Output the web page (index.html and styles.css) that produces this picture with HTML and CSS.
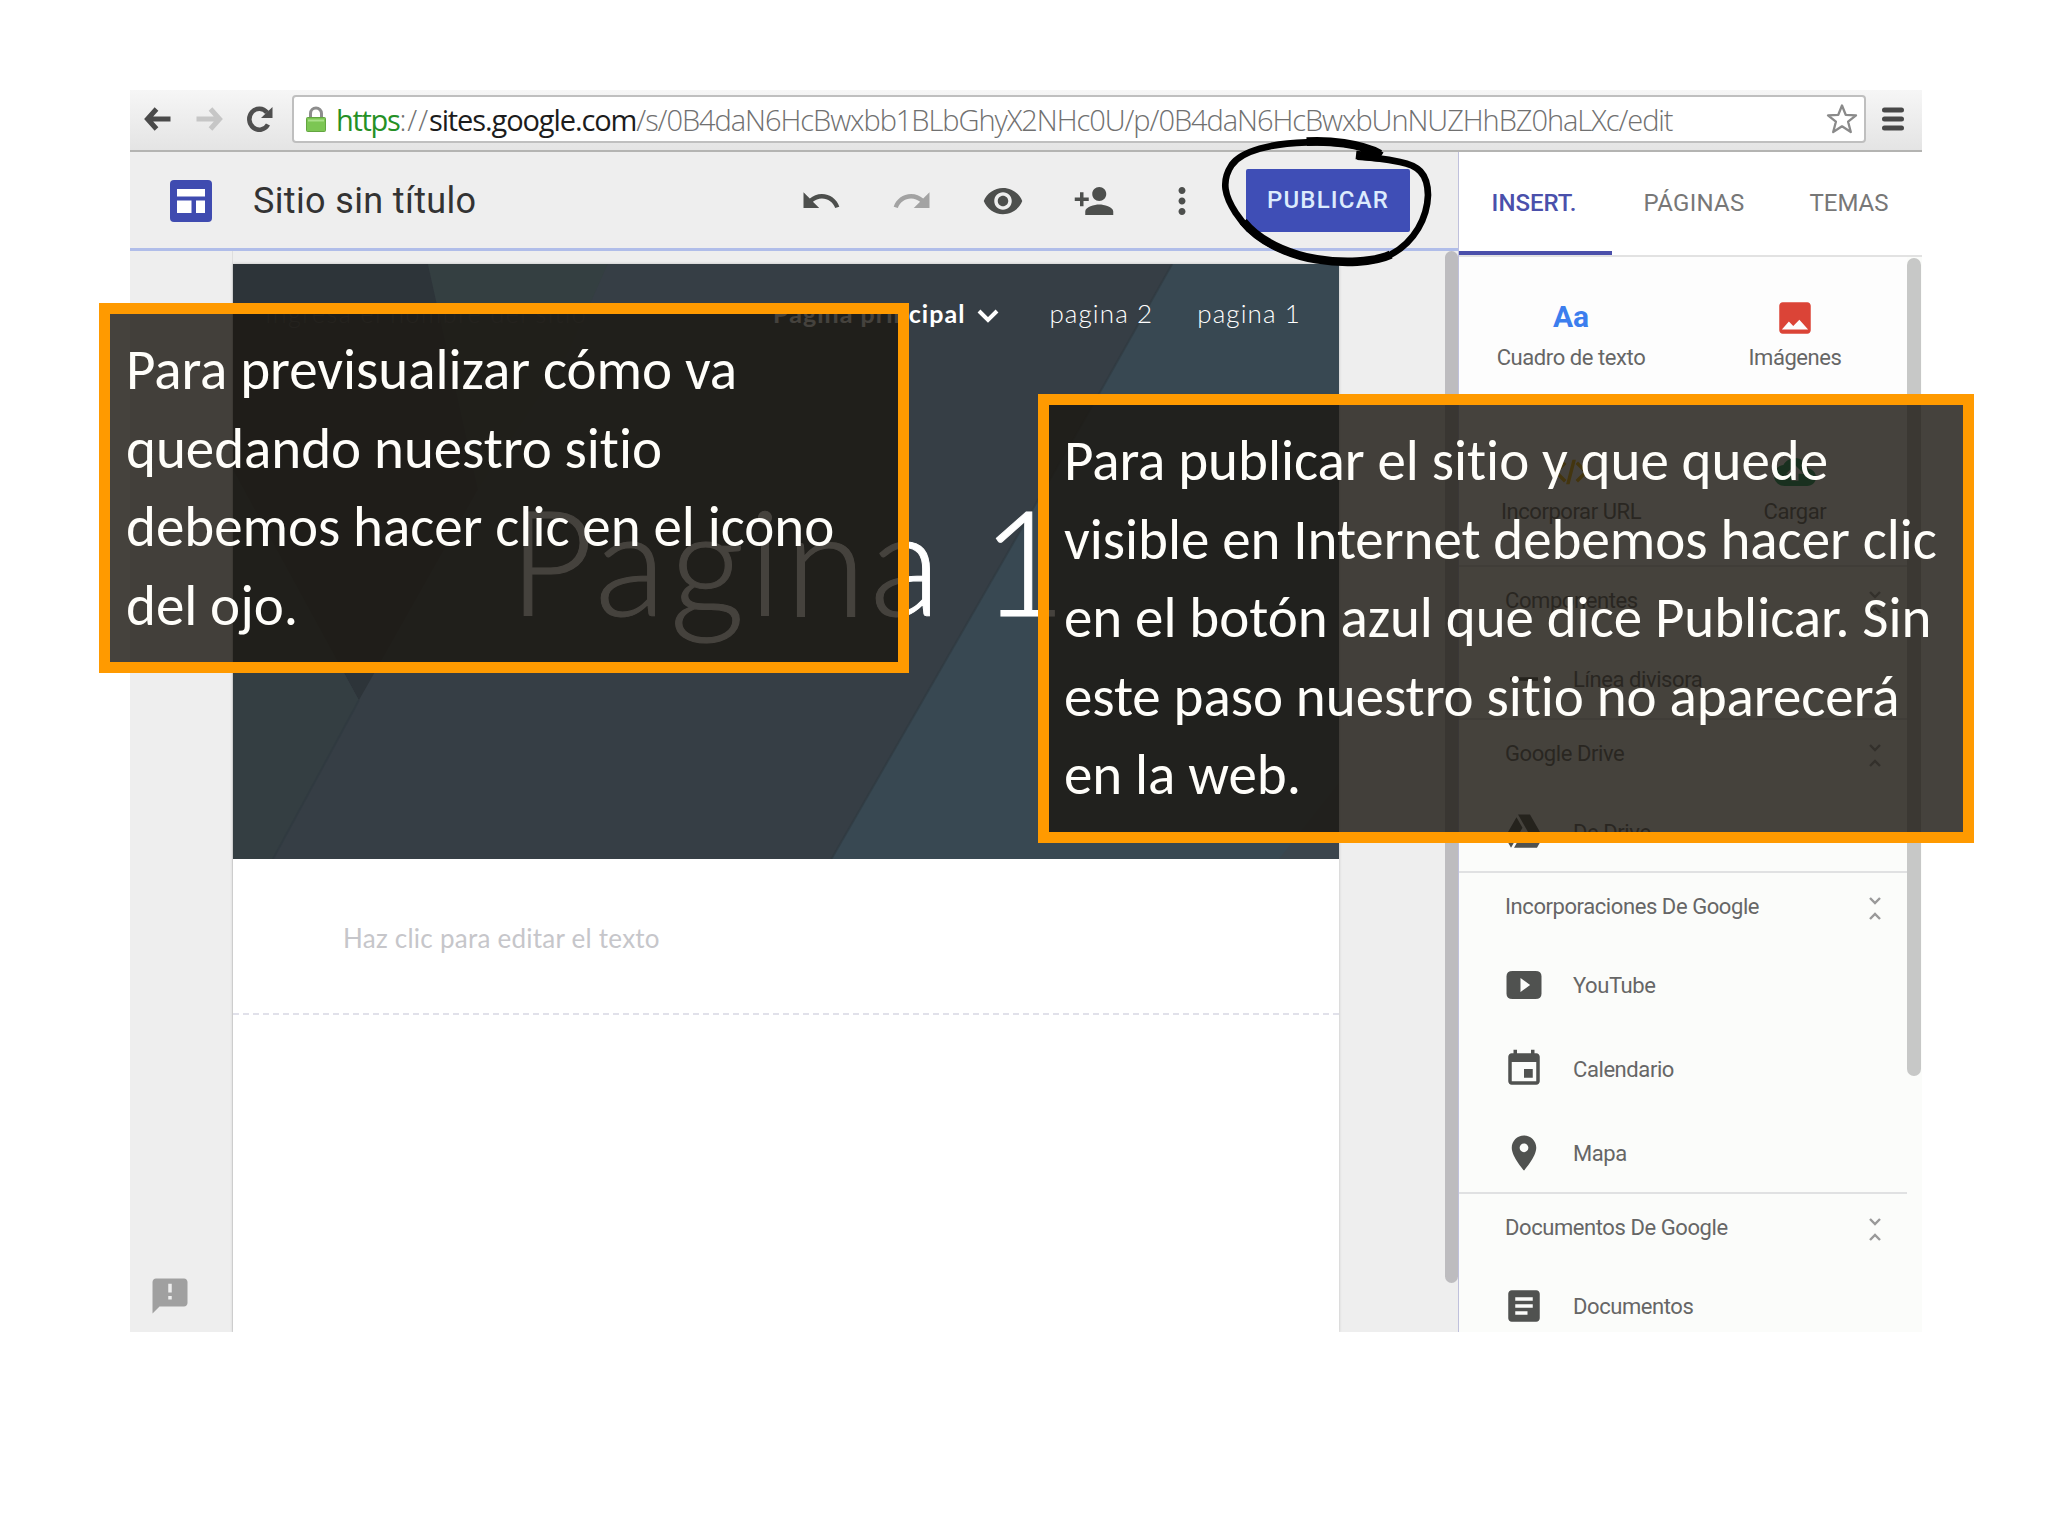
FILE: index.html
```
<!DOCTYPE html>
<html lang="es">
<head>
<meta charset="utf-8">
<title>Sitio sin título</title>
<link rel="stylesheet" href="styles.css">
</head>
<body>
<main class="browser">
  <header class="chrome">
    <svg class="nav-back" viewBox="0 0 27 24"><path d="M12 2 3 12l9 10M4 12h22" fill="none" stroke="currentColor" stroke-width="5"/></svg>
    <svg class="nav-forward" viewBox="0 0 27 24"><path d="M15 2l9 10-9 10M23 12H1" fill="none" stroke="currentColor" stroke-width="5"/></svg>
    <svg class="nav-reload" viewBox="0 0 27 26"><path d="M22 18.500A10 10.500 0 1 1 21 6.500" fill="none" stroke="currentColor" stroke-width="4.600"/><path d="M26.500 1v11H15z" fill="currentColor"/></svg>
    <div class="address">
      <svg class="lock" viewBox="0 0 20 26"><path d="M4.500 13V7.500a5.500 5.500 0 0 1 11 0V13" fill="none" stroke="#8d8d8d" stroke-width="3"/><rect x=".5" y="11.500" width="19" height="14" rx="1" fill="#7cc653" stroke="#63a541"/><path d="M2 14.500h16" stroke="#a9e088" stroke-width="2"/></svg>
      <p class="url"><span class="url-scheme">https</span><span class="url-sep">://</span><span class="url-host">sites.google.com</span><span class="url-path">/s/0B4daN6HcBwxbb1BLbGhyX2NHc0U/p/0B4daN6HcBwxbUnNUZHhBZ0haLXc/edit</span></p>
      <svg class="star" viewBox="0 0 32 32"><path d="M16 2.500l3.700 9.300 10.300.6-7.900 6.300 2.700 10.300L16 23.300 7.200 29l2.700-10.300L2 12.400l10.300-.6z" fill="#fff" stroke="#8a8a8a" stroke-width="2.300" stroke-linejoin="round"/></svg>
    </div>
    <svg class="menu" viewBox="0 0 22 24"><path d="M2.500 3h17M2.500 12h17M2.500 21h17" stroke="#484848" stroke-width="5" stroke-linecap="round"/></svg>
  </header>

  <div class="app">
    <section class="editor">
      <div class="toolbar">
        <svg class="logo" viewBox="0 0 42 42"><rect width="42" height="42" rx="4" fill="#3f4bb0"/><path d="M7 9h28v7.500H7zM7 20.500h14.500v12.500H7zM26 20.500h9v12.500h-9z" fill="#fff"/></svg>
        <h1 class="site-title">Sitio sin título</h1>
        <div class="tools">
          <svg class="icon" viewBox="0 0 24 24"><path d="M12.500 8c-2.650 0-5.050.99-6.900 2.600L2 7v9h9l-3.620-3.620c1.390-1.160 3.160-1.880 5.120-1.880 3.540 0 6.550 2.310 7.600 5.500l2.370-.78C21.080 11.030 17.150 8 12.500 8z"/></svg>
          <svg class="icon icon-off" viewBox="0 0 24 24"><path d="M18.400 10.600C16.550 8.990 14.150 8 11.500 8c-4.650 0-8.580 3.030-9.960 7.220L3.900 16c1.050-3.190 4.050-5.500 7.600-5.500 1.950 0 3.730.72 5.120 1.880L13 16h9V7l-3.600 3.600z"/></svg>
          <svg class="icon" viewBox="0 0 24 24"><path d="M12 4.500C7 4.500 2.730 7.610 1 12c1.730 4.390 6 7.500 11 7.500s9.270-3.110 11-7.500c-1.730-4.390-6-7.500-11-7.500zM12 17c-2.760 0-5-2.240-5-5s2.240-5 5-5 5 2.240 5 5-2.240 5-5 5zm0-8c-1.660 0-3 1.340-3 3s1.340 3 3 3 3-1.340 3-3-1.340-3-3-3z"/></svg>
          <svg class="icon" viewBox="0 0 24 24"><path d="M15 12c2.210 0 4-1.790 4-4s-1.790-4-4-4-4 1.790-4 4 1.790 4 4 4zm-9-2V7H4v3H1v2h3v3h2v-3h3v-2H6zm9 4c-2.670 0-8 1.340-8 4v2h16v-2c0-2.660-5.330-4-8-4z"/></svg>
          <svg class="icon" viewBox="0 0 24 24"><path d="M12 8c1.100 0 2-.9 2-2s-.9-2-2-2-2 .9-2 2 .9 2 2 2zm0 2c-1.100 0-2 .9-2 2s.9 2 2 2 2-.9 2-2-.9-2-2-2zm0 6c-1.100 0-2 .9-2 2s.9 2 2 2 2-.9 2-2-.9-2-2-2z"/></svg>
        </div>
        <button class="publish">PUBLICAR</button>
      </div>
      <div class="canvas">
        <aside class="gutter">
          <svg class="feedback" viewBox="0 0 24 24"><path d="M20 2H4c-1.100 0-1.990.9-1.990 2L2 22l4-4h14c1.100 0 2-.9 2-2V4c0-1.100-.9-2-2-2zm-7 12h-2v-2h2v2zm0-4h-2V5h2v5z"/></svg>
        </aside>
        <article class="page">
          <div class="hero">
            <svg class="facets" viewBox="0 0 1107 596" preserveAspectRatio="none">
              <rect width="1107" height="596" fill="#363e45"/>
              <path d="M195 0h180l-40 90-90 136z" fill="#343f41"/>
              <path d="M0 0h195l50 226-119 211L0 206z" fill="#2d3439"/>
              <path d="M0 206l126 231L40 596H0z" fill="#343e42"/>
              <path d="M940 0h167v596H599l269-468z" fill="#384852"/>
              <path d="M1107 520v76h-60z" fill="#3b454d"/>
              <path d="M940 0l-72 128L599 596M126 437L40 596" fill="none" stroke="#2e383f" stroke-opacity=".6" stroke-width="2"/>
            </svg>
            <nav class="site-nav">
              <span class="site-name">Ingresa el nombre del sitio</span>
              <span class="nav-current">Página principal</span>
              <svg class="caret" viewBox="0 0 22 14"><path d="M2 2l9 9 9-9" fill="none" stroke="#fff" stroke-width="4"/></svg>
              <span class="nav-link nav-two">pagina 2</span>
              <span class="nav-link">pagina 1</span>
            </nav>
            <h2 class="page-title">Pagina 1</h2>
          </div>
          <p class="placeholder">Haz clic para editar el texto</p>
        </article>
        <div class="canvas-scroll"></div>
      </div>
    </section>

    <aside class="panel">
      <div class="tabs">
        <span class="tab tab-active">INSERT.</span>
        <span class="tab tab-pages">PÁGINAS</span>
        <span class="tab tab-themes">TEMAS</span>
      </div>
      <div class="panel-body">
        <div class="insert">
          <div class="tiles">
            <div class="tile"><span class="tile-aa">Aa</span><span class="label">Cuadro de texto</span></div>
            <div class="tile"><svg class="tile-icon red" viewBox="0 0 24 24"><path d="M21 19V5c0-1.100-.9-2-2-2H5c-1.100 0-2 .9-2 2v14c0 1.100.9 2 2 2h14c1.100 0 2-.9 2-2zM4.500 18.500l4-4.500 2.500 2.500L14.500 13l5 5.500z"/></svg><span class="label">Imágenes</span></div>
            <div class="tile"><svg class="tile-icon yellow" viewBox="0 0 24 24"><path d="M9.400 16.600L4.800 12l4.600-4.600L8 6l-6 6 6 6zm5.200 0l4.600-4.600-4.600-4.600L16 6l6 6-6 6zM12.800 5h2L11.200 19h-2z"/></svg><span class="label">Incorporar URL</span></div>
            <div class="tile"><svg class="tile-icon green" viewBox="0 0 24 24"><path d="M19.350 10.040C18.670 6.590 15.640 4 12 4 9.110 4 6.600 5.640 5.350 8.040 2.340 8.360 0 10.910 0 14c0 3.310 2.690 6 6 6h13c2.760 0 5-2.240 5-5 0-2.640-2.050-4.780-4.650-4.960zM14 13v4h-4v-4H7l5-5 5 5h-3z"/></svg><span class="label">Cargar</span></div>
          </div>
          <section class="group">
            <h3 class="group-head"><span class="label">Componentes</span><svg class="fold" viewBox="0 0 12 25"><path d="M1 2l5 5 5-5M1 23l5-5 5 5"/></svg></h3>
            <div class="item"><svg class="icon" viewBox="0 0 24 24"><path d="M4 11h16v2H4z"/></svg><span class="label">Línea divisora</span></div>
          </section>
          <section class="group">
            <h3 class="group-head"><span class="label">Google Drive</span><svg class="fold" viewBox="0 0 12 25"><path d="M1 2l5 5 5-5M1 23l5-5 5 5"/></svg></h3>
            <div class="item"><svg class="icon" viewBox="0 0 24 24"><path d="M7.710 3.500L1.150 15l3.430 6 6.550-11.500M9.730 15L6.300 21h13.120l3.430-6M22.280 14L15.420 2H8.580l6.850 12z"/></svg><span class="label">De Drive</span></div>
          </section>
          <section class="group">
            <h3 class="group-head"><span class="label">Incorporaciones De Google</span><svg class="fold" viewBox="0 0 12 25"><path d="M1 2l5 5 5-5M1 23l5-5 5 5"/></svg></h3>
            <div class="item"><svg class="icon" viewBox="0 0 24 24"><path fill-rule="evenodd" d="M5.500 4h13Q22 4 22 7v10q0 3-3.500 3h-13Q2 20 2 17V7q0-3 3.500-3zM10 8v8l5.500-4z"/></svg><span class="label">YouTube</span></div>
            <div class="item"><svg class="icon" viewBox="0 0 24 24"><path d="M17 12h-5v5h5v-5zM16 1v2H8V1H6v2H5c-1.110 0-1.990.9-1.990 2L3 19c0 1.100.89 2 2 2h14c1.100 0 2-.9 2-2V5c0-1.100-.9-2-2-2h-1V1h-2zm3 18H5V8h14v11z"/></svg><span class="label">Calendario</span></div>
            <div class="item"><svg class="icon" viewBox="0 0 24 24"><path d="M12 2C8.130 2 5 5.130 5 9c0 5.250 7 13 7 13s7-7.750 7-13c0-3.870-3.130-7-7-7zm0 9.500c-1.380 0-2.500-1.120-2.500-2.500s1.120-2.500 2.500-2.500 2.500 1.120 2.500 2.500-1.120 2.500-2.500 2.500z"/></svg><span class="label">Mapa</span></div>
          </section>
          <section class="group">
            <h3 class="group-head"><span class="label">Documentos De Google</span><svg class="fold" viewBox="0 0 12 25"><path d="M1 2l5 5 5-5M1 23l5-5 5 5"/></svg></h3>
            <div class="item"><svg class="icon" viewBox="0 0 24 24"><path d="M19 3H5c-1.100 0-2 .9-2 2v14c0 1.100.9 2 2 2h14c1.100 0 2-.9 2-2V5c0-1.100-.9-2-2-2zm-5 14H7v-2h7v2zm3-4H7v-2h10v2zm0-4H7V7h10v2z"/></svg><span class="label">Documentos</span></div>
          </section>
        </div>
        <div class="panel-scroll"></div>
      </div>
    </aside>
  </div>
</main>

<svg class="marker" viewBox="0 0 780 450"><path d="M545 76C495 42 405 35 320 37C215 40 125 62 95 105C62 155 75 200 108 250C155 325 250 372 350 388C430 401 520 398 572 374C645 335 682 262 684 195C683 128 652 106 600 96C560 88 520 82 472 80" fill="none" stroke="#000" stroke-width="20"/><path d="M320 35C385 31 480 40 540 72M130 275C190 350 300 380 350 388C430 401 520 398 572 374M468 75l70 7" fill="none" stroke="#000" stroke-width="26"/></svg>
<p class="callout callout-preview">Para previsualizar cómo va<br>quedando nuestro sitio<br>debemos hacer clic en el icono<br>del ojo.</p>
<p class="callout callout-publish">Para publicar el sitio y que quede<br>visible en Internet debemos hacer clic<br>en el botón azul que dice Publicar. Sin<br>este paso nuestro sitio no aparecerá<br>en la web.</p>
</body>
</html>
```
FILE: styles.css
```
* { box-sizing: border-box; }
body {
  margin: 0;
  height: 1536px;
  padding: 90px 126px 0 130px;
  background: #fff;
  font-family: Roboto, "Liberation Sans", sans-serif;
  position: relative;
  overflow: hidden;
}
h1, h2, h3, p { margin: 0; font-weight: 400; }
svg { display: block; flex: none; }

.browser { width: 1792px; height: 1242px; overflow: hidden; display: flex; flex-direction: column; }

/* Browser bar */
.chrome {
  height: 62px;
  flex: none;
  display: flex;
  align-items: center;
  padding: 0 18px 2px 14px;
  background: linear-gradient(#f6f6f6, #e4e4e4);
  border-bottom: 2px solid #b4b4b2;
}
.nav-back { width: 28px; height: 24px; color: #4a4a4a; }
.nav-forward { width: 28px; height: 24px; margin-left: 23px; color: #c6c6c6; }
.nav-reload { width: 27px; height: 26px; margin-left: 23px; color: #4f4f4f; }
.address {
  flex: 1;
  height: 48px;
  margin: 0 16px 0 19px;
  padding: 0 6px 0 12px;
  display: flex;
  align-items: center;
  background: #fff;
  border: 2px solid #bfbfbf;
  border-radius: 4px;
}
.lock { width: 20px; height: 26px; }
.url {
  flex: 1;
  padding: 1px 0 0 10px;
  white-space: nowrap;
  font: 300 29px/40px "Open Sans", "Noto Sans", sans-serif;
  color: #707070;
  letter-spacing: -1.05px;
}
.url-scheme { color: #259025; font-weight: 400; letter-spacing: -1.3px; }
.url-sep { letter-spacing: .9px; }
.url-host { color: #1c1c1c; font-weight: 400; letter-spacing: -1.1px; }
.star { width: 32px; height: 32px; }
.menu { width: 22px; height: 24px; }

.app { flex: 1; display: flex; min-height: 0; }

/* Editor */
.editor { width: 1328px; flex: none; display: flex; flex-direction: column; background: #eee; }
.toolbar {
  height: 99px;
  flex: none;
  display: flex;
  align-items: center;
  padding: 1px 48px 0 40px;
  border-bottom: 3px solid #b0bde9;
}
.logo { width: 42px; height: 42px; }
.site-title { margin: 1px 0 0 41px; font-size: 36px; line-height: 44px; letter-spacing: .35px; color: #333; width: 510px; }
.tools { flex: 1; display: flex; gap: 49px; margin-left: 37px; }
.icon { width: 42px; height: 42px; fill: #4d4f4d; }
.tools .icon:last-child { margin-left: -3px; }
.tools .icon-off { fill: #a3a3a3; }
.publish {
  width: 164px;
  height: 63px;
  padding: 0 0 2px;
  border: 0;
  border-radius: 2px;
  background: #3f4eb6;
  color: #dcebfd;
  font: 500 24px/30px Roboto, sans-serif;
  letter-spacing: 1.2px;
}
.canvas { flex: 1; display: flex; min-height: 0; }
.gutter { width: 103px; display: flex; flex-direction: column; justify-content: flex-end; padding: 0 0 15px 19px; border-right: 1px solid #dedede; }
.feedback { width: 42px; height: 42px; fill: #a0a0a0; }
.page { width: 1106px; margin-top: 13px; background: #fff; box-shadow: 0 0 3px rgba(0, 0, 0, .2); }
.canvas-scroll { width: 13px; height: 1032px; margin-left: auto; border-radius: 7px; background: #bdbcbf; }

.hero { position: relative; height: 595px; overflow: hidden; color: #fff; font-family: Lato, "Open Sans", sans-serif; }
.facets { position: absolute; inset: 0; width: 100%; height: 100%; }
.site-nav { position: relative; display: flex; align-items: center; padding: 30px 38px 0 32px; height: 68px; font-size: 25px; white-space: nowrap; }
.site-name { width: 508px; font-weight: 300; letter-spacing: 1.5px; color: #4b5053; }
.nav-current { font-weight: 700; letter-spacing: 1.05px; }
.caret { width: 22px; height: 14px; margin: 5px 0 0 12px; }
.nav-link { font-weight: 300; font-size: 26px; letter-spacing: 1.1px; }
.nav-two { margin: 0 44px 0 auto; }
.page-title { position: relative; margin-top: 140px; padding-left: 276px; font-size: 146px; line-height: 176px; font-weight: 300; letter-spacing: 4.2px; word-spacing: -7px; -webkit-text-stroke: 1px currentColor; }
.placeholder {
  height: 156px;
  padding: 60px 0 0 110px;
  border-bottom: 2px dashed #e1e1ea;
  font: 400 26px/38px Lato, sans-serif;
  letter-spacing: .25px;
  color: #c6c6ca;
}

/* Insert panel */
.panel { flex: 1; min-width: 0; display: flex; flex-direction: column; border-left: 1px solid #bfc0dc; background: #fbfcfa; color: #666; }
.tabs { height: 105px; flex: none; display: flex; border-bottom: 2px solid #e2e2e2; background: #fff; }
.tab { display: flex; align-items: center; justify-content: center; height: 103px; font-size: 24px; color: #777; padding-bottom: 1px; }
.tab-active { width: 153px; height: 103px; border-bottom: 4px solid #4b50ab; color: #4a50ab; font-weight: 500; padding: 3px 3px 0 0; }
.tab-pages { width: 164px; letter-spacing: .26px; }
.tab-themes { width: 146px; }
.panel-body { flex: 1; display: flex; min-height: 0; }
.insert { width: 448px; }
.panel-scroll { width: 14px; height: 818px; margin-top: 1px; border-radius: 7px; background: #c7c8c7; }
.label { font-size: 22px; line-height: 28px; letter-spacing: -.42px; white-space: nowrap; padding-top: 1px; }
.tiles { display: grid; grid-template-columns: 224px 224px; grid-template-rows: 154px 154px; background: #fdfdfd; }
.tile { display: flex; flex-direction: column; align-items: center; padding-top: 40px; }
.tile .label { margin-top: 4px; }
.tile-aa { height: 42px; font-size: 30px; line-height: 39px; font-weight: 700; color: #3c7eee; }
.tile-icon { width: 42px; height: 42px; }
.red { fill: #db4437; }
.yellow { fill: #f4b400; }
.green { fill: #0f9d58; }
.group { border-top: 2px solid #e0e1e2; margin-bottom: -3px; }
.group-head { height: 70px; display: flex; align-items: center; justify-content: space-between; padding: 0 26px 3px 46px; }
.fold { width: 12px; height: 25px; margin-top: 4px; fill: none; stroke: #999; stroke-width: 2.4; }
.item { height: 84px; display: flex; align-items: center; gap: 28px; padding-left: 44px; }
.item .icon { fill: #505250; }

/* Annotations */
.marker { position: absolute; left: 1200px; top: 130px; width: 260px; height: 150px; }
.callout {
  position: absolute;
  border: 11px solid #ff9a00;
  background: rgba(28, 25, 18, .82) padding-box;
  color: #fffefa;
  font: 400 57px/78.500px Carlito, Calibri, Lato, sans-serif;
  font-variant-ligatures: none;
  letter-spacing: -.04px;
  white-space: nowrap;
}
.callout-preview { left: 99px; top: 303px; width: 810px; height: 370px; padding: 17px 0 0 16px; }
.callout-publish { left: 1038px; top: 394px; width: 936px; height: 449px; padding: 17px 0 0 15px; }
```
